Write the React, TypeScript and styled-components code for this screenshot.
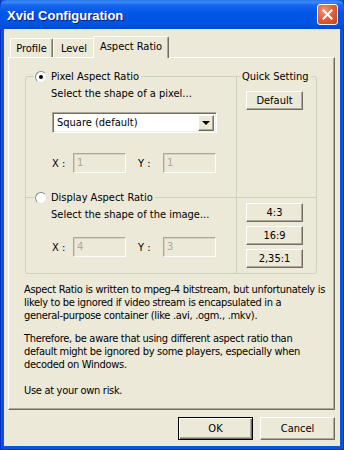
import styled, { createGlobalStyle, css } from "styled-components";

const GlobalStyle = createGlobalStyle`
  html, body { margin: 0; padding: 0; background: #fff; }
  * { box-sizing: border-box; }
`;

const face = "#ECE9D8";
const uiFont = `"DejaVu Sans Condensed", "DejaVu Sans", sans-serif`;

const raised = css`
  border: 1px solid;
  border-color: #fff #716f64 #716f64 #fff;
  box-shadow: inset -1px -1px #aca899;
`;

const Window = styled.div`
  width: 344px;
  height: 450px;
  display: flex;
  flex-direction: column;
  background: #0853e0;
  box-shadow: inset 1px 0 #0831c0, inset -1px 0 #0831c0, inset 0 -1px #0831c0;
  font-family: ${uiFont};
  font-stretch: condensed;
  font-size: 11px;
  color: #000;
`;

const TitleBar = styled.div`
  height: 29px;
  flex: none;
  display: flex;
  align-items: center;
  padding: 0 6px 0 7px;
  border-radius: 7px 7px 0 0;
  background: linear-gradient(
    to bottom,
    #2a74ee 0%,
    #3c8af7 7%,
    #1766ee 18%,
    #0056e5 45%,
    #0053e1 85%,
    #0046cf 100%
  );
`;

const Title = styled.span`
  font-family: "Liberation Sans", Arial, sans-serif;
  font-weight: bold;
  font-size: 13px;
  color: #fff;
  text-shadow: 1px 1px #0a1e80;
  margin-top: 1px;
`;

const CloseButton = styled.div`
  margin-left: auto;
  width: 21px;
  height: 21px;
  border: 1px solid #fff;
  border-radius: 3px;
  background: radial-gradient(circle at 35% 30%, #f39a7c 0%, #e2603b 45%, #c8401c 100%);
  display: flex;
  align-items: center;
  justify-content: center;
`;

const Client = styled.div`
  flex: 1;
  margin: 0 4px 4px 4px;
  background: ${face};
  display: flex;
  flex-direction: column;
  padding: 7px 5px 6px 4px;
`;

const TabStrip = styled.div`
  display: flex;
  align-items: flex-end;
  height: 21px;
  padding-left: 2px;
  position: relative;
  z-index: 1;
`;

const Tab = styled.div<{ $active?: boolean; $w: number }>`
  width: ${(p) => p.$w}px;
  height: ${(p) => (p.$active ? 22 : 19)}px;
  margin-bottom: ${(p) => (p.$active ? -1 : 0)}px;
  ${(p) => (p.$active ? "margin-left: -2px; margin-right: -2px;" : "")}
  background: ${face};
  border-top: 1px solid #fff;
  border-left: 1px solid #fff;
  border-right: 1px solid #716f64;
  box-shadow: inset -1px 0 #aca899;
  border-radius: 2px 2px 0 0;
  display: flex;
  align-items: center;
  justify-content: center;
  padding-bottom: ${(p) => (p.$active ? 3 : 0)}px;
`;

const Panel = styled.div`
  flex: 1;
  ${raised};
  padding: 18px 0 0 16px;
  display: flex;
  flex-direction: column;
`;

const Frame = styled.div`
  width: 292px;
  display: grid;
  grid-template-columns: 211px 79px;
  grid-template-rows: 121px 75px;
  border: 1px solid #d0d0bf;
  border-radius: 3px;
`;

const Cell = styled.div<{ $right?: boolean; $top?: boolean }>`
  display: flex;
  flex-direction: column;
  align-items: flex-start;
  border-right: ${(p) => (p.$right ? "none" : "1px solid #d0d0bf")};
  border-bottom: ${(p) => (p.$top ? "1px solid #d0d0bf" : "none")};
`;

const Legend = styled.div<{ $indent: number }>`
  margin-top: -7px;
  margin-left: ${(p) => p.$indent}px;
  height: 13px;
  padding: 0 2px 0 1px;
  background: ${face};
  display: flex;
  align-items: center;
  gap: 4px;
  line-height: 13px;
  white-space: nowrap;
`;

const Radio = styled.span<{ $checked?: boolean }>`
  width: 12px;
  height: 12px;
  border-radius: 50%;
  border: 1px solid;
  border-color: #8d8b80 #e6e4da #e6e4da #8d8b80;
  background: #fff;
  display: flex;
  align-items: center;
  justify-content: center;
  &::after {
    content: "";
    width: 4px;
    height: 4px;
    border-radius: 50%;
    background: ${(p) => (p.$checked ? "#000" : "transparent")};
  }
`;

const Hint = styled.div<{ $top: number }>`
  margin: ${(p) => p.$top}px 0 0 25px;
  line-height: 13px;
  white-space: nowrap;
`;

const Combo = styled.div`
  margin: 12px 0 0 26px;
  width: 165px;
  height: 21px;
  background: #fff;
  border: 1px solid;
  border-color: #aca899 #fff #fff #aca899;
  box-shadow: inset 1px 1px #716f64, inset -1px -1px #f1efe2;
  display: flex;
  align-items: center;
  padding: 2px 2px 2px 4px;
`;

const ComboText = styled.span`
  flex: 1;
  line-height: 13px;
`;

const ComboArrow = styled.div`
  width: 16px;
  height: 16px;
  background: ${face};
  ${raised};
  display: flex;
  align-items: center;
  justify-content: center;
  &::after {
    content: "";
    border-left: 4px solid transparent;
    border-right: 4px solid transparent;
    border-top: 4px solid #000;
  }
`;

const XYRow = styled.div<{ $top: number }>`
  margin: ${(p) => p.$top}px 0 0 26px;
  display: flex;
  align-items: center;
`;

const AxisLabel = styled.span<{ $w: number; $pad?: number }>`
  width: ${(p) => p.$w}px;
  padding-left: ${(p) => p.$pad ?? 0}px;
  line-height: 13px;
`;

const NumField = styled.div`
  width: 53px;
  height: 20px;
  border: 1px solid;
  border-color: #aca899 #fdfdfb #fdfdfb #aca899;
  box-shadow: inset 1px 1px #d6d3c4;
  color: #aca899;
  padding: 2px 0 0 3px;
  line-height: 13px;
`;

const QuickButtons = styled.div<{ $top: number }>`
  margin: ${(p) => p.$top}px 0 0 9px;
  display: flex;
  flex-direction: column;
  gap: 4px;
`;

const Button = styled.div<{ $w: number; $h: number; $default?: boolean }>`
  width: ${(p) => p.$w}px;
  height: ${(p) => p.$h}px;
  background: ${face};
  display: flex;
  align-items: center;
  justify-content: center;
  line-height: 13px;
  ${(p) =>
    p.$default
      ? css`
          border: 1px solid #000;
          box-shadow: inset 1px 1px #fff, inset -1px -1px #716f64, inset -2px -2px #aca899;
        `
      : raised};
`;

const Notes = styled.div`
  margin: 9px 0 0 -1px;
  display: flex;
  flex-direction: column;
  white-space: nowrap;
`;

const Para = styled.p<{ $gap: number }>`
  margin: ${(p) => p.$gap}px 0 0 0;
  line-height: 13px;
  letter-spacing: -0.3px;
`;

const Footer = styled.div`
  display: flex;
  justify-content: flex-end;
  gap: 7px;
  margin-top: 7px;
`;

export default function App() {
  return (
    <>
      <GlobalStyle />
      <Window>
        <TitleBar>
          <Title>Xvid Configuration</Title>
          <CloseButton>
            <svg width="11" height="11" viewBox="0 0 11 11">
              <path d="M1.5 1.5 L9.5 9.5 M9.5 1.5 L1.5 9.5" stroke="#fff" strokeWidth="2" strokeLinecap="square" />
            </svg>
          </CloseButton>
        </TitleBar>
        <Client>
          <TabStrip>
            <Tab $w={43}>Profile</Tab>
            <Tab $w={42}>Level</Tab>
            <Tab $w={76} $active>
              Aspect Ratio
            </Tab>
          </TabStrip>
          <Panel>
            <Frame>
              <Cell $top>
                <Legend $indent={8}>
                  <Radio $checked />
                  Pixel Aspect Ratio
                </Legend>
                <Hint $top={4}>Select the shape of a pixel...</Hint>
                <Combo>
                  <ComboText>Square (default)</ComboText>
                  <ComboArrow />
                </Combo>
                <XYRow $top={20}>
                  <AxisLabel $w={21}>X :</AxisLabel>
                  <NumField>1</NumField>
                  <AxisLabel $w={37} $pad={12}>
                    Y :
                  </AxisLabel>
                  <NumField>1</NumField>
                </XYRow>
              </Cell>
              <Cell $top $right>
                <Legend $indent={4}>Quick Setting</Legend>
                <QuickButtons $top={8}>
                  <Button $w={57} $h={19}>
                    Default
                  </Button>
                </QuickButtons>
              </Cell>
              <Cell>
                <Legend $indent={8}>
                  <Radio />
                  Display Aspect Ratio
                </Legend>
                <Hint $top={4}>Select the shape of the image...</Hint>
                <XYRow $top={16}>
                  <AxisLabel $w={21}>X :</AxisLabel>
                  <NumField>4</NumField>
                  <AxisLabel $w={37} $pad={12}>
                    Y :
                  </AxisLabel>
                  <NumField>3</NumField>
                </XYRow>
              </Cell>
              <Cell $right>
                <QuickButtons $top={5}>
                  <Button $w={57} $h={19}>
                    4:3
                  </Button>
                  <Button $w={57} $h={19}>
                    16:9
                  </Button>
                  <Button $w={57} $h={19}>
                    2,35:1
                  </Button>
                </QuickButtons>
              </Cell>
            </Frame>
            <Notes>
              <Para $gap={0}>
                Aspect Ratio is written to mpeg-4 bitstream, but unfortunately is
                <br />
                likely to be ignored if video stream is encapsulated in a
                <br />
                general-purpose container (like .avi, .ogm., .mkv).
              </Para>
              <Para $gap={10}>
                Therefore, be aware that using different aspect ratio than
                <br />
                default might be ignored by some players, especially when
                <br />
                decoded on Windows.
              </Para>
              <Para $gap={13}>Use at your own risk.</Para>
            </Notes>
          </Panel>
          <Footer>
            <Button $w={75} $h={23} $default>
              OK
            </Button>
            <Button $w={75} $h={23}>
              Cancel
            </Button>
          </Footer>
        </Client>
      </Window>
    </>
  );
}
